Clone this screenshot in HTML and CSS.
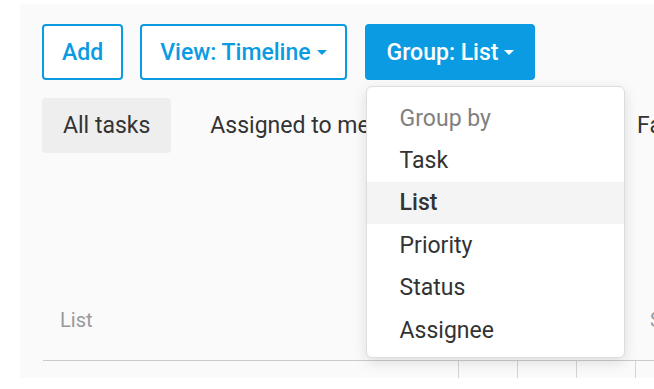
FILE: index.html
```html
<!DOCTYPE html>
<html lang="en">
<head>
    <meta charset="UTF-8">
    <meta name="viewport" content="width=device-width, initial-scale=1.0">
    <title>Tasks</title>
    <link rel="stylesheet" href="styles.css">
</head>
<body>
    <div class="panel">
        <div class="toolbar">
            <button class="btn">Add</button>
            <button class="btn">View: Timeline <span class="caret"></span></button>
            <div class="group-wrap">
                <button class="btn btn-primary">Group: List <span class="caret"></span></button>
                <div class="menu">
                    <div class="menu-title">Group by</div>
                    <div class="menu-item">Task</div>
                    <div class="menu-item active">List</div>
                    <div class="menu-item">Priority</div>
                    <div class="menu-item">Status</div>
                    <div class="menu-item">Assignee</div>
                </div>
            </div>
        </div>

        <div class="tabs">
            <div class="tab selected">All tasks</div>
            <div class="tab">Assigned to me</div>
            <div class="tab">Created by me</div>
            <div class="tab">Favorites</div>
        </div>

        <div class="table">
            <div class="head">
                <div class="cell cell-list">List</div>
                <div class="cell"></div>
                <div class="cell"></div>
                <div class="cell"></div>
                <div class="cell cell-status">Status</div>
            </div>
            <div class="row">
                <div class="cell cell-list"></div>
                <div class="cell"></div>
                <div class="cell"></div>
                <div class="cell"></div>
                <div class="cell"></div>
            </div>
        </div>
    </div>
</body>
</html>
```

FILE: styles.css
```css
body {
    margin: 0;
    background-color: #ffffff;
    font-family: Roboto, 'Liberation Sans', sans-serif;
    color: #333333;
    overflow: hidden;
}
.panel {
    margin: 4px 0 0 20px;
    height: 374px;
    padding: 20px 0 0 22px;
    box-sizing: border-box;
    background-color: #fafafa;
    overflow: hidden;
}
.toolbar {
    display: flex;
    gap: 17px;
}
.btn {
    height: 56px;
    padding: 0 18px;
    background-color: #ffffff;
    border: 2px solid #0a9be2;
    border-radius: 4px;
    color: #0a9be2;
    font-family: inherit;
    font-size: 23px;
    font-weight: 500;
    display: flex;
    align-items: center;
}
.btn-primary {
    background-color: #0a9be2;
    color: #ffffff;
    padding: 0 19px 0 20px;
}
.caret {
    margin-left: 6px;
    border-left: 5px solid transparent;
    border-right: 5px solid transparent;
    border-top: 5px solid currentColor;
}
.group-wrap {
    position: relative;
    margin-left: 1px;
}
.menu {
    position: absolute;
    left: 1px;
    top: 62px;
    width: 259px;
    height: 272px;
    padding: 10px 0;
    box-sizing: border-box;
    background-color: #ffffff;
    border: 1px solid #dddddd;
    border-radius: 6px;
    box-shadow: 0 4px 14px rgba(0, 0, 0, 0.12);
    z-index: 2;
}
.menu-title,
.menu-item {
    height: 42.4px;
    padding-left: 33px;
    display: flex;
    align-items: center;
    font-size: 23px;
}
.menu-title {
    color: #808080;
}
.menu-item.active {
    background-color: #f4f4f4;
    font-weight: 500;
}
.tabs {
    display: flex;
    gap: 18px;
    margin-top: 18px;
}
.tab {
    height: 55px;
    padding: 0 21px;
    display: flex;
    align-items: center;
    font-size: 23px;
    white-space: nowrap;
    border-radius: 4px;
}
.tab.selected {
    background-color: #eeeeee;
}
.table {
    margin-top: 127px;
    margin-left: 1px;
}
.head,
.row {
    display: flex;
}
.head {
    height: 80px;
    align-items: center;
    border-bottom: 1px solid #cccccc;
}
.row {
    height: 30px;
}
.cell {
    width: 59px;
    flex-shrink: 0;
    box-sizing: border-box;
}
.cell-list {
    width: 416px;
    padding-left: 17px;
    font-size: 20px;
    color: #999999;
}
.cell-status {
    padding-left: 14px;
    font-size: 20px;
    color: #999999;
}
.row .cell {
    border-right: 1px solid #d4d4d4;
}
```
